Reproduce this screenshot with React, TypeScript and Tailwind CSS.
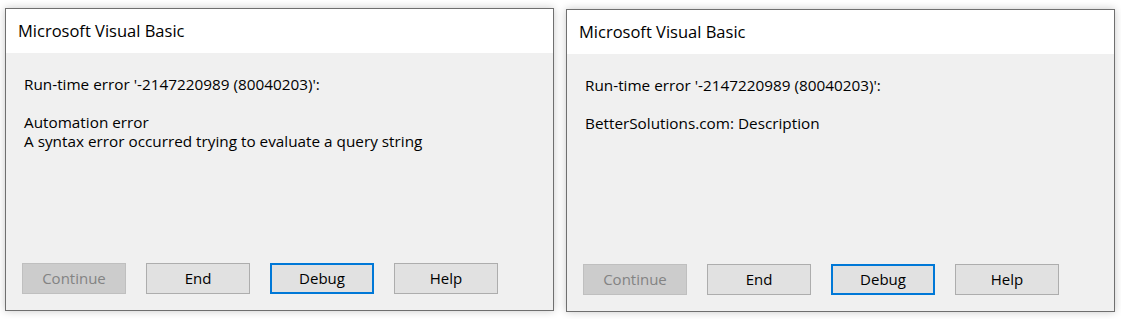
import React from 'react';

type DialogProps = {
  lines: string[];
  className?: string;
};

const buttons = ['Continue', 'End', 'Debug', 'Help'];

const ErrorDialog: React.FC<DialogProps> = ({ lines, className }) => {
  return (
    <div
      className={`flex h-[303px] w-[549px] flex-col border border-[#6f6f6f] bg-[#f0f0f0] shadow-[0_0_8px_rgba(0,0,0,0.22)] ${className ?? ''}`}
    >
      {/* Title bar */}
      <div className="flex h-[44px] items-center bg-white pl-[12px] pt-[1px] text-[16.5px] text-black">
        Microsoft Visual Basic
      </div>

      {/* Message */}
      <div className="flex-1 pl-[18px] pt-[22px] text-[15.3px] leading-[19px] text-black">
        {lines.map((line, idx) => (
          <div key={idx} className="h-[19px] whitespace-pre">
            {line}
          </div>
        ))}
      </div>

      {/* Buttons */}
      <div className="flex gap-[20px] px-[16px] pb-[16px]">
        {buttons.map((label) => {
          if (label === 'Continue') {
            return (
              <div
                key={label}
                className="flex h-[31px] w-[104px] items-center justify-center border border-[#bfbfbf] bg-[#cccccc] text-[15px] text-[#838383]"
              >
                {label}
              </div>
            );
          }
          if (label === 'Debug') {
            return (
              <div
                key={label}
                className="flex h-[31px] w-[104px] items-center justify-center border-2 border-[#0078d7] bg-[#e1e1e1] text-[15px] text-black"
              >
                {label}
              </div>
            );
          }
          return (
            <div
              key={label}
              className="flex h-[31px] w-[104px] items-center justify-center border border-[#adadad] bg-[#e1e1e1] text-[15px] text-black"
            >
              {label}
            </div>
          );
        })}
      </div>
    </div>
  );
};

export default function App() {
  return (
    <div className="flex h-[319px] w-[1121px] items-start gap-[12px] bg-white pl-[5px] pt-[8px] font-['Open_Sans',sans-serif]">
      <ErrorDialog
        lines={[
          "Run-time error '-2147220989 (80040203)':",
          ' ',
          'Automation error',
          'A syntax error occurred trying to evaluate a query string',
        ]}
      />
      <ErrorDialog
        className="mt-[1px]"
        lines={["Run-time error '-2147220989 (80040203)':", ' ', 'BetterSolutions.com: Description']}
      />
    </div>
  );
}
